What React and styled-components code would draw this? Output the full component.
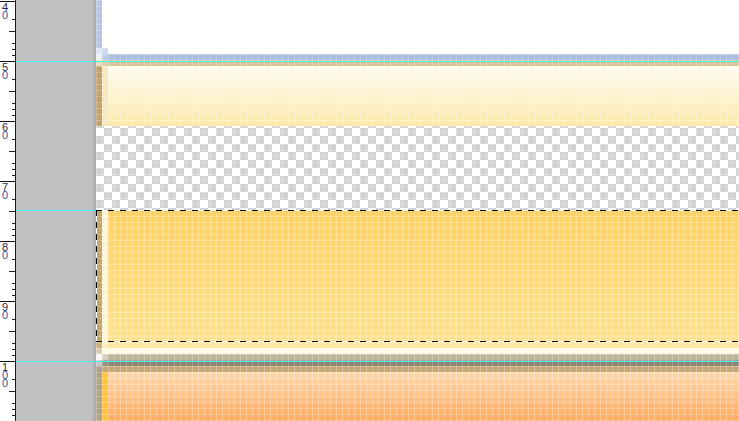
import React from 'react'
import styled, { createGlobalStyle } from 'styled-components'

const GlobalStyle = createGlobalStyle`
    html, body {
        margin: 0;
        padding: 0;
        background: #ffffff;
        overflow: hidden;
    }
    body {
        font-family: "Liberation Sans", Arial, sans-serif;
    }
`

const Editor = styled.div`
    position: relative;
    width: 739px;
    height: 421px;
    display: flex;
    overflow: hidden;
`

const RulerBox = styled.div`
    width: 16px;
    flex: none;
    box-sizing: border-box;
    padding-top: 1px;
    background: #ffffff;
    border-right: 1px solid #1a1a1a;
    display: flex;
    flex-direction: column;
`

const Segment = styled.div`
    position: relative;
    height: 60px;
    flex: none;
    box-sizing: border-box;
    border-top: 1px solid #111;
    padding: 1px 0 0 2px;
`

const Ticks = styled.svg`
    position: absolute;
    right: 0;
    top: -1px;
`

const Digit = styled.span`
    display: block;
    height: 8px;
    font-size: 11px;
    line-height: 8px;
    color: ${p => (p.$first ? '#1c2a44' : '#2d5aa0')};
`

const Gutter = styled.div`
    width: 80px;
    flex: none;
    background: linear-gradient(to right, #c0c0c0 0, #c0c0c0 76px, #b4b4b4 77px, #a9a9a9 80px);
`

const Canvas = styled.div`
    position: relative;
    flex: 1;
    display: flex;
    flex-direction: column;
`

const Row = styled.div`
    height: ${p => p.$h}px;
    flex: none;
    background:
        linear-gradient(${p => p.$b1}, ${p => p.$b1}) 0 0 / 6px 100% no-repeat,
        linear-gradient(${p => p.$b2}, ${p => p.$b2}) 6px 0 / 6px 100% no-repeat,
        ${p => p.$fill};
`

const Checker = styled.div`
    height: ${p => p.$h}px;
    flex: none;
    background-color: #ffffff;
    background-image:
        linear-gradient(45deg, #d2d2d2 25%, transparent 25%, transparent 75%, #d2d2d2 75%),
        linear-gradient(45deg, #d2d2d2 25%, transparent 25%, transparent 75%, #d2d2d2 75%);
    background-size: 16px 16px;
    background-position: 0 2px, 8px 10px;
`

const PixelGrid = styled.div`
    position: absolute;
    inset: 0;
    pointer-events: none;
    background-image:
        linear-gradient(to right, rgba(255, 255, 255, 0.24) 1px, transparent 1px),
        linear-gradient(to bottom, rgba(255, 255, 255, 0.24) 1px, transparent 1px);
    background-size: 6px 6px;
`

const Guide = styled.div`
    position: absolute;
    z-index: 2;
    left: 16px;
    right: 0;
    top: ${p => p.$y}px;
    height: 1px;
    background: #46eef0;
`

const Selection = styled.div`
    position: absolute;
    z-index: 3;
    left: 96px;
    right: -4px;
    top: ${p => p.$top}px;
    height: ${p => p.$h}px;
    pointer-events: none;
    background:
        repeating-linear-gradient(to right, #000 0 6px, #fff 6px 12px) 0 0 / 100% 1px no-repeat,
        repeating-linear-gradient(to right, #000 0 6px, #fff 6px 12px) 0 100% / 100% 1px no-repeat,
        repeating-linear-gradient(to bottom, #000 0 6px, #fff 6px 12px) 0 0 / 1px 100% no-repeat;
`

const labels = ['40', '50', '60', '70', '80', '90', '100']
const minorSteps = [3, 5, 7, 8, 9]

const Ruler = () => (
    <RulerBox>
        {labels.map(label => (
            <Segment key={label}>
                <Ticks width="6" height="60" viewBox="0 0 6 60">
                    {minorSteps.map(k => (
                        <line
                            key={k}
                            x1={k === 5 ? 0 : 3}
                            y1={k * 6 + 0.5}
                            x2="6"
                            y2={k * 6 + 0.5}
                            stroke="#222"
                        />
                    ))}
                </Ticks>
                {label.split('').map((d, i) => (
                    <Digit key={i} $first={i === 0}>{d}</Digit>
                ))}
            </Segment>
        ))}
    </RulerBox>
)

const rows = [
    { h: 48, b1: '#b4c8e6', b2: '#ffffff', fill: '#ffffff' },
    { h: 6, b1: '#dfe7f3', b2: '#ccd9ee', fill: '#ffffff' },
    { h: 6, b1: '#eef2f8', b2: '#b9cbe7', fill: '#a9bfe2' },
    { h: 6, b1: '#e6dcc0', b2: '#dccfa8', fill: '#d5c595' },
    { h: 60, b1: '#c2a26a', b2: '#f6e8c0', fill: 'linear-gradient(#fffcef, #fde9a8)' },
    { checker: true, h: 84 },
    { h: 132, b1: '#c4a56c', b2: '#fff5d6', fill: 'linear-gradient(#ffd163, #ffe28c)' },
    { h: 6, b1: '#c9b184', b2: '#fff0c0', fill: '#ffe69e' },
    { h: 6, b1: '#d9ceb4', b2: '#fffae6', fill: '#fffae6' },
    { h: 6, b1: '#fafafa', b2: '#d6cfc0', fill: '#c0b496' },
    { h: 6, b1: '#c8c6c0', b2: '#9a9280', fill: '#8e8570' },
    { h: 6, b1: '#a8a090', b2: '#c4a878', fill: '#c7a874' },
    { h: 49, b1: '#b0a488', b2: '#ffc43c', fill: 'linear-gradient(#ffd8ab, #ffab5e)' },
]

const App = () => {
    return (
        <>
            <GlobalStyle />
            <Editor>
                <Ruler />
                <Gutter />
                <Canvas>
                    {rows.map((r, i) =>
                        r.checker ? (
                            <Checker key={i} $h={r.h} />
                        ) : (
                            <Row key={i} $h={r.h} $b1={r.b1} $b2={r.b2} $fill={r.fill} />
                        )
                    )}
                    <PixelGrid />
                </Canvas>
                <Guide $y={61} />
                <Guide $y={210} />
                <Guide $y={361} />
                <Selection $top={210} $h={132} />
            </Editor>
        </>
    )
}

export default App
